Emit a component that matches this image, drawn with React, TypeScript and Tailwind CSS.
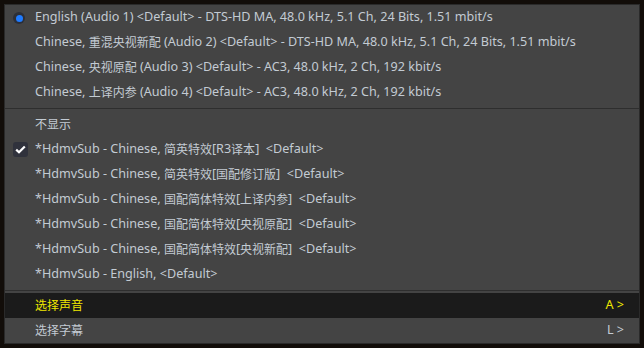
import React from 'react';

const audio = [
  'English (Audio 1) <Default> - DTS-HD MA, 48.0 kHz, 5.1 Ch, 24 Bits, 1.51 mbit/s',
  'Chinese, 重混央视新配 (Audio 2) <Default> - DTS-HD MA, 48.0 kHz, 5.1 Ch, 24 Bits, 1.51 mbit/s',
  'Chinese, 央视原配 (Audio 3) <Default> - AC3, 48.0 kHz, 2 Ch, 192 kbit/s',
  'Chinese, 上译内参 (Audio 4) <Default> - AC3, 48.0 kHz, 2 Ch, 192 kbit/s',
];

const subs = [
  '不显示',
  '*HdmvSub - Chinese, 简英特效[R3译本]  <Default>',
  '*HdmvSub - Chinese, 简英特效[国配修订版]  <Default>',
  '*HdmvSub - Chinese, 国配简体特效[上译内参]  <Default>',
  '*HdmvSub - Chinese, 国配简体特效[央视原配]  <Default>',
  '*HdmvSub - Chinese, 国配简体特效[央视新配]  <Default>',
  '*HdmvSub - English, <Default>',
];

// CJK glyphs in the original are a touch narrower than the latin run
function Label({ text }: { text: string }) {
  const parts = text.split(/([\u4e00-\u9fff]+)/);
  return (
    <>
      {parts.map((p, i) =>
        /[\u4e00-\u9fff]/.test(p) ? (
          <span key={i} className="text-[12px]">
            {p}
          </span>
        ) : (
          <React.Fragment key={i}>{p}</React.Fragment>
        )
      )}
    </>
  );
}

function Row({ text, mark }: { text: string; mark?: 'radio' | 'check' }) {
  return (
    <div className="relative flex h-[25px] items-center pl-[30px] whitespace-pre text-[#c3cbd3]">
      {mark === 'radio' && (
        <span className="absolute left-[8px] top-[7px] flex h-[12px] w-[12px] items-center justify-center rounded-full bg-[#2c2f38]">
          <span className="h-[7px] w-[7px] rounded-full bg-[#1f7bff]" />
        </span>
      )}
      {mark === 'check' && (
        <span className="absolute left-[8px] top-[5px] flex h-[15px] w-[15px] items-center justify-center rounded-[3px] bg-[#30323c]">
          <svg width="11" height="9" viewBox="0 0 11 9">
            <path d="M1.2 4.6 L4 7.3 L9.8 1.4" fill="none" stroke="#ffffff" strokeWidth="2.2" />
          </svg>
        </span>
      )}
      <Label text={text} />
    </div>
  );
}

export default function App() {
  return (
    <div className="h-[348px] w-[644px] overflow-hidden bg-[#120d09] p-[4px]">
      <div
        className="h-[340px] w-[636px] border border-[#2a2a2a] bg-[#444444] text-[12.6px]"
        style={{ fontFamily: '"Noto Sans", "Noto Sans CJK SC", sans-serif' }}
      >
        {audio.map((a, i) => (
          <Row key={i} text={a} mark={i === 0 ? 'radio' : undefined} />
        ))}
        <div className="my-[3px] h-px bg-[#2e2e2e]" />
        {subs.map((s, i) => (
          <Row key={i} text={s} mark={i === 1 ? 'check' : undefined} />
        ))}
        <div className="mt-[3px] h-px bg-[#2e2e2e]" />
        <div className="mt-[2px] flex h-[25px] items-center justify-between bg-[#1b1b1b] pl-[30px] pr-[15px] text-[#f0e800]">
          <span className="text-[12px]">选择声音</span>
          <span>A &gt;</span>
        </div>
        <div className="flex h-[25px] items-center justify-between pl-[30px] pr-[15px] text-[#c3cbd3]">
          <span className="text-[12px]">选择字幕</span>
          <span>L &gt;</span>
        </div>
      </div>
    </div>
  );
}
